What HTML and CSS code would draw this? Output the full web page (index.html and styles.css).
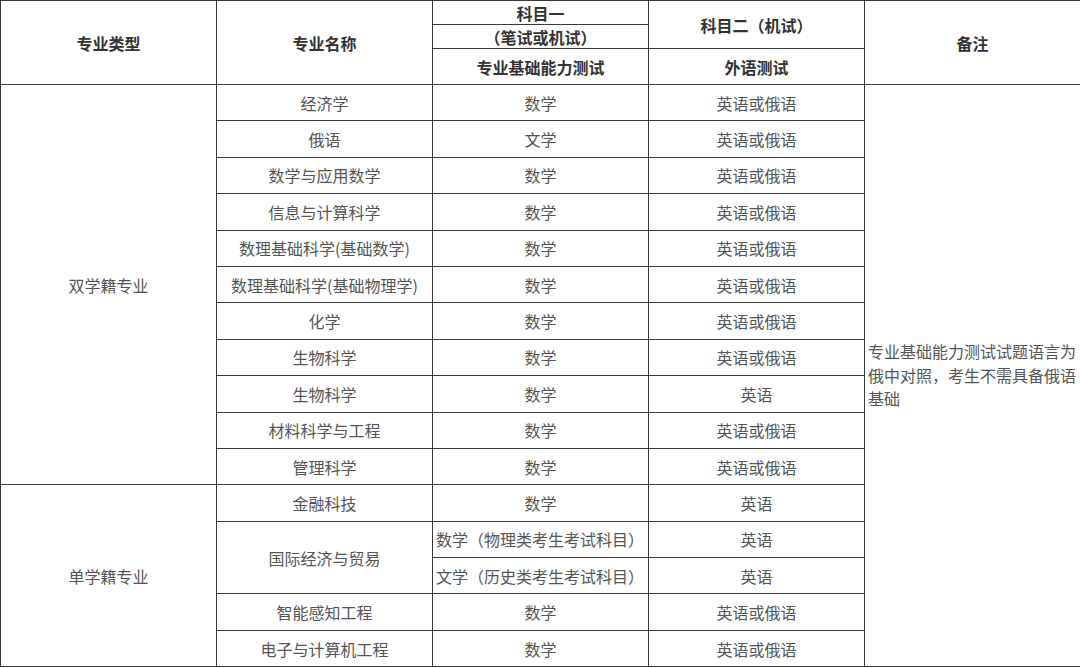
FILE: index.html
```html
<!DOCTYPE html>
<html lang="zh-CN">
<head>
<meta charset="utf-8">
<title>专业与考试科目</title>
<link rel="stylesheet" href="styles.css">
</head>
<body>
<table class="grid">
  <colgroup>
    <col class="c"><col class="c"><col class="c"><col class="c"><col class="c">
  </colgroup>
  <thead>
    <tr class="h1">
      <th rowspan="3">专业类型</th>
      <th rowspan="3">专业名称</th>
      <th>科目一</th>
      <th rowspan="2">科目二（机试）</th>
      <th rowspan="3">备注</th>
    </tr>
    <tr class="h2">
      <th>（笔试或机试）</th>
    </tr>
    <tr class="h3">
      <th>专业基础能力测试</th>
      <th>外语测试</th>
    </tr>
  </thead>
  <tbody>
    <tr><td rowspan="11">双学籍专业</td><td>经济学</td><td>数学</td><td>英语或俄语</td><td rowspan="16" class="note">专业基础能力测试试题语言为俄中对照，考生不需具备俄语基础</td></tr>
    <tr><td>俄语</td><td>文学</td><td>英语或俄语</td></tr>
    <tr><td>数学与应用数学</td><td>数学</td><td>英语或俄语</td></tr>
    <tr><td>信息与计算科学</td><td>数学</td><td>英语或俄语</td></tr>
    <tr><td>数理基础科学(基础数学)</td><td>数学</td><td>英语或俄语</td></tr>
    <tr><td>数理基础科学(基础物理学)</td><td>数学</td><td>英语或俄语</td></tr>
    <tr><td>化学</td><td>数学</td><td>英语或俄语</td></tr>
    <tr><td>生物科学</td><td>数学</td><td>英语或俄语</td></tr>
    <tr><td>生物科学</td><td>数学</td><td>英语</td></tr>
    <tr><td>材料科学与工程</td><td>数学</td><td>英语或俄语</td></tr>
    <tr><td>管理科学</td><td>数学</td><td>英语或俄语</td></tr>
    <tr><td rowspan="5">单学籍专业</td><td>金融科技</td><td>数学</td><td>英语</td></tr>
    <tr><td rowspan="2">国际经济与贸易</td><td class="left">数学（物理类考生考试科目）</td><td>英语</td></tr>
    <tr><td class="left">文学（历史类考生考试科目）</td><td>英语</td></tr>
    <tr><td>智能感知工程</td><td>数学</td><td>英语或俄语</td></tr>
    <tr><td>电子与计算机工程</td><td>数学</td><td>英语或俄语</td></tr>
  </tbody>
</table>
</body>
</html>
```
FILE: styles.css
```css
html, body {
  margin: 0;
  padding: 0;
  background: #ffffff;
}

.grid {
  border-collapse: collapse;
  table-layout: fixed;
  width: 1080px;
  font-family: "Noto Sans CJK SC", "Microsoft YaHei", sans-serif;
  font-size: 16px;
  color: #555555;
}

.grid .c {
  width: 216px;
}

.grid th,
.grid td {
  border: 1px solid #3a3a3a;
  padding: 0 3px;
  text-align: center;
  vertical-align: middle;
  line-height: 20px;
  white-space: nowrap;
}

.grid th {
  font-weight: bold;
  color: #333333;
}

.grid .h1 { height: 24px; }
.grid .h2 { height: 24px; }
.grid .h3 { height: 36px; }

.grid tbody tr {
  height: 36.4px;
}

.grid td.left {
  text-align: left;
}

.grid td.note {
  text-align: left;
  white-space: normal;
  line-height: 23.5px;
  padding: 0 0 0 3px;
}
```
